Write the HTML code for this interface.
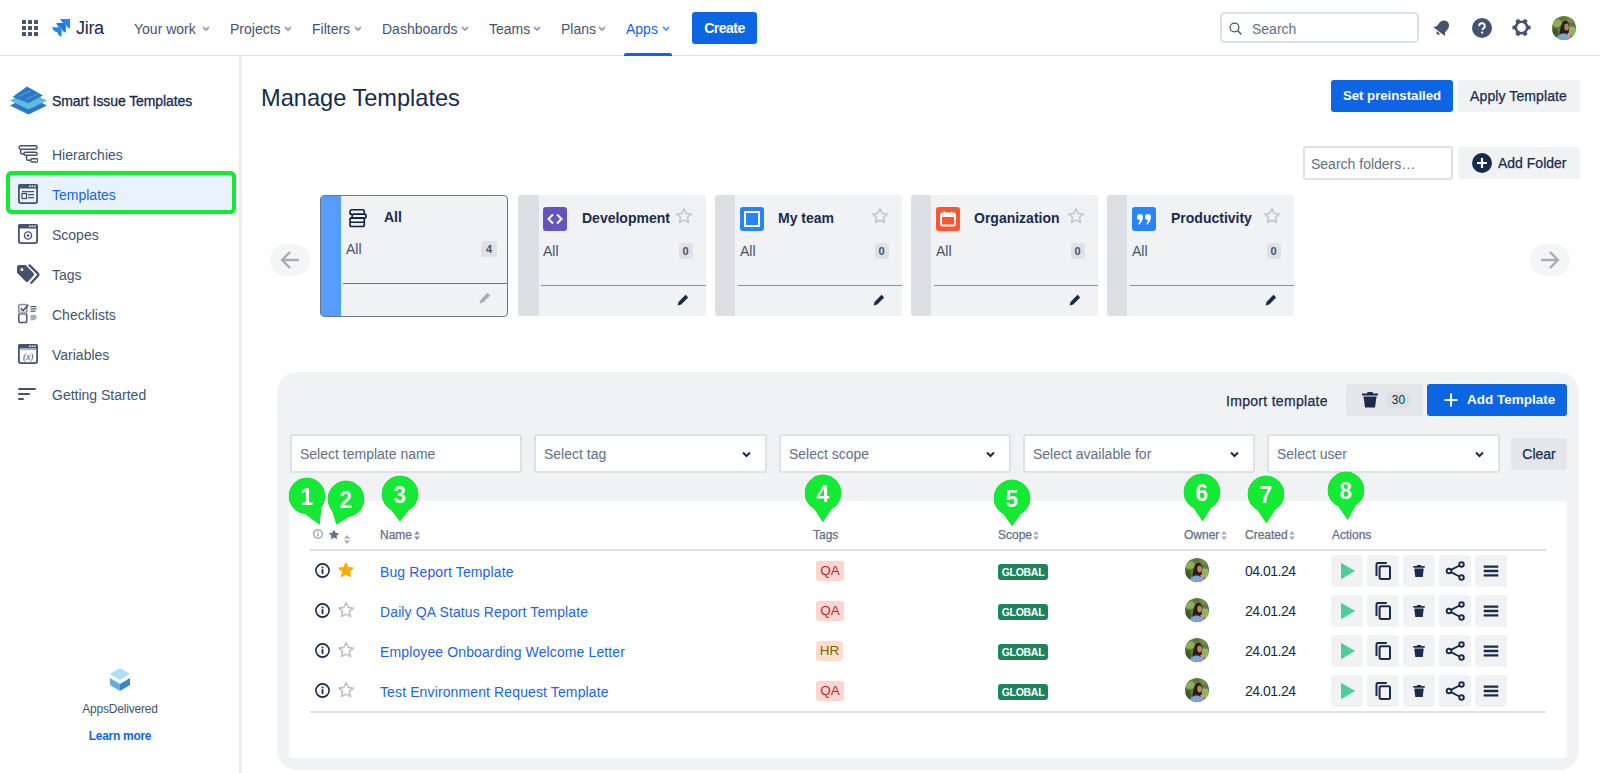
<!DOCTYPE html>
<html><head><meta charset="utf-8">
<style>
*{box-sizing:border-box;margin:0;padding:0}
html,body{width:1600px;height:773px;overflow:hidden;background:#fff;font-family:"Liberation Sans",sans-serif;color:#172b4d}
.a{position:absolute}
.t{position:absolute;white-space:nowrap;line-height:1}
svg{display:block}
/* header */
#hdr{position:absolute;left:0;top:0;width:1600px;height:56px;border-bottom:1px solid #dfe1e6;background:#fff}
.nav{position:absolute;top:21px;font-size:14px;color:#44546f;line-height:16px}
.chev{position:absolute;top:26px}
/* sidebar */
#side{position:absolute;left:0;top:56px;width:239px;height:717px;background:#fff}
#sideb{position:absolute;left:239px;top:56px;width:3px;height:717px;background:#ebecf0}
.si{position:absolute;left:52px;font-size:14px;color:#44546f;line-height:16px}
/* cards */
.card{position:absolute;top:195px;width:186.5px;height:121px;background:#f1f2f4;border-radius:3px;overflow:hidden}
.card .bar{position:absolute;left:0;top:0;width:21px;height:100%;background:#dcdfe4}
.card .ttl{position:absolute;top:15px;font-size:14px;font-weight:bold;color:#172b4d;line-height:16px}
.card .sub{position:absolute;left:25px;top:48px;font-size:14px;color:#44546f;line-height:16px}
.card .cnt{position:absolute;right:13px;top:48px;width:14px;height:16px;background:#dfe1e6;border-radius:3px;font-size:11px;font-weight:bold;color:#44546f;text-align:center;line-height:16px}
.card .div{position:absolute;left:23px;right:0;top:90px;height:1px;background:#8590a2}
.card .pen{position:absolute;right:16.5px;top:99px}
.card .star{position:absolute;right:12.5px;top:12px}
/* panel */
#panel{position:absolute;left:277px;top:372px;width:1302px;height:398px;background:#f1f2f4;border-radius:20px}
.inp{position:absolute;top:434px;height:39px;background:#fff;border:2px solid #dfe1e6;border-radius:3px;font-size:14px;color:#626f86;line-height:37px;padding-left:8px}
.inp svg{position:absolute;right:14px;top:15px}
#white{position:absolute;left:289px;top:501px;width:1278px;height:257px;background:#fff;border-radius:4px}
.th{position:absolute;top:529px;font-size:12px;color:#626f86;line-height:12px;-webkit-text-stroke:0.25px #626f86}
.sort{position:absolute;top:531px}
.link{position:absolute;left:380px;font-size:14px;color:#1d65de;line-height:16px;letter-spacing:0.12px}
.tag{position:absolute;left:816px;width:28px;height:20px;border-radius:3px;font-size:13.5px;line-height:19px;text-align:center}
.glob{position:absolute;left:998px;width:50px;height:16px;background:#1f845a;border-radius:3px;color:#fff;font-size:10.5px;font-weight:bold;line-height:16px;text-align:center;letter-spacing:-0.3px}
.date{position:absolute;left:1245px;font-size:14px;color:#172b4d;line-height:16px;letter-spacing:-0.5px}
.ab{position:absolute;width:32px;height:32px;background:#f1f2f4;border-radius:3px}
.ab svg{position:absolute;left:0;top:0}
.av{position:absolute;width:24px;height:24px;border-radius:50%;overflow:hidden}
.mk{position:absolute;width:40px;height:52px}
</style></head>
<body>
<!-- HEADER -->
<div id="hdr">
  <svg class="a" style="left:22px;top:20px" width="16" height="16" viewBox="0 0 16 16" fill="#44546f">
    <rect x="0" y="0" width="4" height="4" rx="0.6"/><rect x="6" y="0" width="4" height="4" rx="0.6"/><rect x="12" y="0" width="4" height="4" rx="0.6"/>
    <rect x="0" y="6" width="4" height="4" rx="0.6"/><rect x="6" y="6" width="4" height="4" rx="0.6"/><rect x="12" y="6" width="4" height="4" rx="0.6"/>
    <rect x="0" y="12" width="4" height="4" rx="0.6"/><rect x="6" y="12" width="4" height="4" rx="0.6"/><rect x="12" y="12" width="4" height="4" rx="0.6"/>
  </svg>
  <svg class="a" style="left:52px;top:18px" width="19" height="19" viewBox="0 0 19 19">
    <path d="M8.4 1h9.6v9.6C16 10.2 14.2 8.6 13.8 6 11.2 5.6 9 3.6 8.4 1z" fill="#2684ff"/>
    <path d="M4.2 5.1h9.6v9.6C11.8 14.3 10 12.7 9.6 10.1 7 9.7 4.8 7.7 4.2 5.1z" fill="#1d78f2"/>
    <path d="M0 9.2h9.6v9.6C7.6 18.4 5.8 16.8 5.4 14.2 2.8 13.8 .6 11.8 0 9.2z" fill="#2684ff"/>
  </svg>
  <div class="t" style="left:76px;top:19px;font-size:18px;color:#172b4d;line-height:18px;letter-spacing:-0.3px">Jira</div>

  <div class="nav" style="left:134px">Your work</div>
  <div class="nav" style="left:230px">Projects</div>
  <div class="nav" style="left:312px">Filters</div>
  <div class="nav" style="left:382px">Dashboards</div>
  <div class="nav" style="left:489px">Teams</div>
  <div class="nav" style="left:561px">Plans</div>
  <div class="nav" style="left:626px;color:#0c66e4">Apps</div>
  <svg class="chev" style="left:202px" width="8" height="6" viewBox="0 0 8 6"><path d="M1 1l3 3 3-3" stroke="#a1a9b7" stroke-width="2" fill="none"/></svg>
  <svg class="chev" style="left:284px" width="8" height="6" viewBox="0 0 8 6"><path d="M1 1l3 3 3-3" stroke="#a1a9b7" stroke-width="2" fill="none"/></svg>
  <svg class="chev" style="left:354px" width="8" height="6" viewBox="0 0 8 6"><path d="M1 1l3 3 3-3" stroke="#a1a9b7" stroke-width="2" fill="none"/></svg>
  <svg class="chev" style="left:461px" width="8" height="6" viewBox="0 0 8 6"><path d="M1 1l3 3 3-3" stroke="#a1a9b7" stroke-width="2" fill="none"/></svg>
  <svg class="chev" style="left:533px" width="8" height="6" viewBox="0 0 8 6"><path d="M1 1l3 3 3-3" stroke="#a1a9b7" stroke-width="2" fill="none"/></svg>
  <svg class="chev" style="left:598px" width="8" height="6" viewBox="0 0 8 6"><path d="M1 1l3 3 3-3" stroke="#a1a9b7" stroke-width="2" fill="none"/></svg>
  <svg class="chev" style="left:662px" width="8" height="6" viewBox="0 0 8 6"><path d="M1 1l3 3 3-3" stroke="#579dff" stroke-width="1.8" fill="none"/></svg>
  <div class="a" style="left:624px;top:53px;width:48px;height:3px;background:#0c66e4;border-radius:2px 2px 0 0"></div>
  <div class="a" style="left:692px;top:12px;width:65px;height:32px;background:#0c66e4;border-radius:3px;color:#fff;font-size:14px;font-weight:bold;text-align:center;line-height:33px;letter-spacing:-0.5px">Create</div>

  <div class="a" style="left:1220px;top:12px;width:199px;height:31px;border:2px solid #dcdfe4;border-radius:5px"></div>
  <svg class="a" style="left:1229px;top:22px" width="14" height="13" viewBox="0 0 14 13"><circle cx="5.5" cy="5.5" r="4.4" stroke="#44546f" stroke-width="1.3" fill="none"/><path d="M8.8 8.8l3.6 3.6" stroke="#44546f" stroke-width="1.4"/></svg>
  <div class="t" style="left:1252px;top:21px;font-size:14px;color:#626f86;line-height:16px">Search</div>

  <svg class="a" style="left:1432px;top:18px" width="20" height="20" viewBox="0 0 20 20"><g transform="rotate(38 10 10)"><path d="M10 1.8c-3.2 0-5.2 2.4-5.2 5.4v4.2L2.8 14.6h14.4l-2-3.2V7.2c0-3-2-5.4-5.2-5.4z" fill="#44546f"/><path d="M8 15.8a2 2 0 004 0z" fill="#44546f"/></g></svg>
  <svg class="a" style="left:1472px;top:18px" width="20" height="20" viewBox="0 0 20 20"><circle cx="10" cy="10" r="10" fill="#44546f"/><path d="M7.2 8.2a2.8 2.8 0 115.2 1.2c-.6.9-1.9 1.3-1.9 2.6" stroke="#fff" stroke-width="2" fill="none"/><rect x="9.1" y="13.6" width="2" height="2" fill="#fff"/></svg>
  <svg class="a" style="left:1512px;top:18px" width="19" height="19" viewBox="0 0 19 19"><g fill="#44546f"><circle cx="9.5" cy="9.5" r="7"/><rect x="7.4" y="0.4" width="4.2" height="4.5" rx="1.3" transform="rotate(30 9.5 9.5)"/><rect x="7.4" y="0.4" width="4.2" height="4.5" rx="1.3" transform="rotate(90 9.5 9.5)"/><rect x="7.4" y="0.4" width="4.2" height="4.5" rx="1.3" transform="rotate(150 9.5 9.5)"/><rect x="7.4" y="0.4" width="4.2" height="4.5" rx="1.3" transform="rotate(210 9.5 9.5)"/><rect x="7.4" y="0.4" width="4.2" height="4.5" rx="1.3" transform="rotate(270 9.5 9.5)"/><rect x="7.4" y="0.4" width="4.2" height="4.5" rx="1.3" transform="rotate(330 9.5 9.5)"/></g><circle cx="9.5" cy="9.5" r="4.4" fill="#fff"/></svg>
  <div class="av" style="left:1552px;top:16px">
    <svg width="24" height="24" viewBox="0 0 24 24"><rect width="24" height="24" fill="#5c7b3a"/><ellipse cx="5" cy="7" rx="5" ry="4" fill="#8fae5c"/><ellipse cx="20" cy="15" rx="4" ry="5" fill="#94b262"/><ellipse cx="19" cy="4" rx="4" ry="3" fill="#6f9048"/><ellipse cx="3" cy="17" rx="3" ry="5" fill="#3f5d2a"/><circle cx="4" cy="3" r="1.2" fill="#8a5aa0"/><circle cx="21" cy="3.5" r="1.2" fill="#9a62b0"/><circle cx="20" cy="10" r="1" fill="#8a5aa0"/><path d="M7 22c.5-5 1-9 2.2-13C10.2 6 12 4.6 14 4.8c2 .2 3.2 2.4 3.2 5.5 0 3.5-.6 7-1.2 10z" fill="#2e1d15"/><ellipse cx="14.6" cy="11" rx="2.3" ry="3.6" fill="#b48470"/><path d="M4.5 24c.8-3.5 2.5-6 5.5-6.5 2.5-.3 5 .3 6.5 2L17 24z" fill="#7ea4da"/><path d="M15.2 17.2l1.6-.5 2.8 7.3h-2z" fill="#e58ad0"/></svg>
  </div>
</div>

<!-- SIDEBAR -->
<div id="sideb"></div>
<svg class="a" style="left:10px;top:86px" width="37" height="29" viewBox="0 0 37 29">
  <path d="M0 19.5L18.5 10.5 37 19.5 18.5 28.5z" fill="#2b78c6"/>
  <path d="M0 14.5L18.5 5.5 37 14.5 18.5 23.5z" fill="#5fbcd9"/>
  <path d="M2.5 11L17 0.5 33 9.5 18.5 17z" fill="#2b78c6"/>
  <path d="M8.5 10.5L21 4.5M16 13.5L28.5 7.5" stroke="#4a9fd5" stroke-width="1.3"/>
</svg>
<div class="t" style="left:52px;top:93px;font-size:14px;color:#172b4d;line-height:16px;-webkit-text-stroke:0.3px #172b4d;letter-spacing:-0.1px">Smart Issue Templates</div>

<div class="a" style="left:6px;top:171px;width:230px;height:43px;border:4px solid #12ea33;border-radius:6px;background:#e9f2ff;box-shadow:0 0 1px rgba(0,0,0,.5)"></div>

<svg class="a" style="left:18px;top:145px" width="20" height="19" viewBox="0 0 20 19" fill="none" stroke="#44546f" stroke-width="1.5">
  <rect x="1.1" y="0.75" width="18" height="3.4" rx="1.7"/><rect x="6" y="7.35" width="13.1" height="3" rx="1.5"/><rect x="12.75" y="13.85" width="7.1" height="3.2" rx="1.3"/>
  <path d="M2.6 4.3V7.6q0 1.3 1.3 1.3H6M8.6 10.6v3.4q0 1.3 1.3 1.3h2.9"/>
</svg>
<div class="si" style="top:147px">Hierarchies</div>

<svg class="a" style="left:18px;top:184px" width="20" height="20" viewBox="0 0 20 20">
  <rect x="0.9" y="0.9" width="18.2" height="18.2" rx="2" fill="none" stroke="#44546f" stroke-width="1.8"/><rect x="0" y="0" width="20" height="4.5" rx="2" fill="#44546f"/>
  <rect x="11" y="1.5" width="1.6" height="1.4" fill="#fff"/><rect x="13.5" y="1.5" width="1.6" height="1.4" fill="#fff"/><rect x="16" y="1.5" width="1.6" height="1.4" fill="#fff"/>
  <rect x="4" y="7" width="12" height="1.2" fill="#44546f"/><rect x="4" y="9.5" width="4.5" height="5" fill="none" stroke="#44546f" stroke-width="1.3"/><rect x="10" y="10" width="6" height="1.3" fill="#44546f"/><rect x="10" y="13" width="6" height="1.3" fill="#44546f"/>
</svg>
<div class="si" style="top:187px;color:#0c66e4">Templates</div>

<svg class="a" style="left:18px;top:224px" width="20" height="20" viewBox="0 0 20 20">
  <rect x="0.9" y="0.9" width="18.2" height="18.2" rx="2" fill="none" stroke="#44546f" stroke-width="1.8"/><rect x="0" y="0" width="20" height="4.5" rx="2" fill="#44546f"/>
  <rect x="11" y="1.5" width="1.6" height="1.4" fill="#fff"/><rect x="13.5" y="1.5" width="1.6" height="1.4" fill="#fff"/><rect x="16" y="1.5" width="1.6" height="1.4" fill="#fff"/>
  <circle cx="10" cy="11.5" r="3.6" fill="none" stroke="#44546f" stroke-width="1.4"/><circle cx="10" cy="11.5" r="1.3" fill="#44546f"/>
</svg>
<div class="si" style="top:227px">Scopes</div>

<svg class="a" style="left:16px;top:264px" width="24" height="20" viewBox="0 0 24 20">
  <path d="M13.6 1.4l8.1 8q1.2 1.3 0 2.6l-6.4 6.8" fill="none" stroke="#44546f" stroke-width="2.3" stroke-linecap="round"/>
  <path d="M1 3q0-2 2-2h6.6l7.9 7.9q1.3 1.4 0 2.8l-5.3 5.7q-1.2 1.2-2.5 0L1 8.8z" fill="#44546f"/><circle cx="5.9" cy="5.5" r="1.5" fill="#fff"/>
</svg>
<div class="si" style="top:267px">Tags</div>

<svg class="a" style="left:18px;top:303px" width="20" height="21" viewBox="0 0 20 21">
  <rect x="0.8" y="1.5" width="8" height="8" rx="1.2" fill="none" stroke="#8590a2" stroke-width="1.5"/><path d="M2.8 5.2l2.3 2.3 5.2-5.8" fill="none" stroke="#44546f" stroke-width="1.6"/>
  <rect x="0.8" y="10.8" width="8" height="8.6" rx="1.2" fill="none" stroke="#44546f" stroke-width="1.5"/><rect x="1" y="8.8" width="7.6" height="2" fill="#a5adba"/>
  <rect x="12.5" y="3" width="6" height="1.2" fill="#44546f"/><rect x="12.5" y="5.3" width="6" height="1.2" fill="#44546f"/><rect x="12.5" y="7.6" width="5" height="1.2" fill="#44546f"/>
  <path d="M12.5 12h6v3.2l-2 2h-4z" fill="#a5adba"/>
</svg>
<div class="si" style="top:307px">Checklists</div>

<svg class="a" style="left:18px;top:344px" width="20" height="20" viewBox="0 0 20 20">
  <rect x="0.9" y="0.9" width="18.2" height="18.2" rx="2" fill="none" stroke="#44546f" stroke-width="1.8"/><rect x="0" y="0" width="20" height="4.5" rx="2" fill="#44546f"/>
  <rect x="11" y="1.5" width="1.6" height="1.4" fill="#fff"/><rect x="13.5" y="1.5" width="1.6" height="1.4" fill="#fff"/><rect x="16" y="1.5" width="1.6" height="1.4" fill="#fff"/>
  <rect x="1.5" y="5.3" width="17" height="0.8" fill="#8590a2"/><text x="10" y="15.8" font-family="Liberation Serif" font-style="italic" font-size="10" text-anchor="middle" fill="#44546f" letter-spacing="-0.3">(x)</text>
</svg>
<div class="si" style="top:347px">Variables</div>

<svg class="a" style="left:18px;top:388px" width="19" height="12" viewBox="0 0 19 12" fill="#44546f">
  <rect x="0" y="0" width="18" height="2" rx="1"/><rect x="0" y="5" width="12" height="2" rx="1"/><rect x="0" y="10" width="6" height="2" rx="1"/>
</svg>
<div class="si" style="top:387px">Getting Started</div>

<svg class="a" style="left:110px;top:668px" width="20" height="23" viewBox="0 0 20 23">
  <path d="M10 0L20 6 10 12 0 6z" fill="#aedff5"/>
  <path d="M0 10l10 6v7L0 17z" fill="#5fb0e6"/><path d="M20 10l-10 6v7l10-6z" fill="#3d84c6"/>
</svg>
<div class="t" style="left:82px;top:703px;width:76px;font-size:12px;color:#44546f;line-height:12px;letter-spacing:-0.2px;text-align:center">AppsDelivered</div>
<div class="t" style="left:60px;top:730px;width:120px;font-size:12px;font-weight:bold;color:#0c66e4;line-height:12px;text-align:center;letter-spacing:-0.3px">Learn more</div>

<!-- MAIN TOP -->
<div class="t" style="left:261px;top:86px;font-size:23.6px;color:#172b4d;line-height:24px">Manage Templates</div>
<div class="a" style="left:1331px;top:80px;width:122px;height:32px;background:#0c66e4;border-radius:3px;color:#fff;font-size:13.2px;font-weight:bold;text-align:center;line-height:32px">Set preinstalled</div>
<div class="a" style="left:1457px;top:80px;width:123px;height:32px;background:#f1f2f4;border-radius:3px;color:#172b4d;font-size:14px;text-align:center;line-height:32px;-webkit-text-stroke:0.25px #172b4d;letter-spacing:0.1px">Apply Template</div>
<div class="a" style="left:1303px;top:146px;width:150px;height:34px;border:2px solid #dfe1e6;border-radius:3px;font-size:14px;color:#626f86;line-height:32px;padding-left:6px">Search folders…</div>
<div class="a" style="left:1458px;top:147px;width:122px;height:32px;background:#f1f2f4;border-radius:3px"></div>
<svg class="a" style="left:1472px;top:153px" width="20" height="20" viewBox="0 0 20 20"><circle cx="10" cy="10" r="10" fill="#172b4d"/><path d="M10 5v10M5 10h10" stroke="#fff" stroke-width="2.2"/></svg>
<div class="t" style="left:1498px;top:155px;font-size:14px;color:#172b4d;line-height:16px;-webkit-text-stroke:0.25px #172b4d">Add Folder</div>

<!-- arrows -->
<div class="a" style="left:270px;top:244px;width:40px;height:32px;border-radius:16px;background:#f4f5f7"></div>
<svg class="a" style="left:280px;top:250px" width="20" height="20" viewBox="0 0 20 20"><path d="M19 10H2.5M10 2L2 10l8 8" stroke="#a5adba" stroke-width="2.4" fill="none"/></svg>
<div class="a" style="left:1530px;top:244px;width:40px;height:32px;border-radius:16px;background:#f4f5f7"></div>
<svg class="a" style="left:1540px;top:250px" width="20" height="20" viewBox="0 0 20 20"><path d="M1 10h16.5M10 2l8 8-8 8" stroke="#a5adba" stroke-width="2.4" fill="none"/></svg>

<!-- CARDS -->
<div class="card" style="left:320px;width:188px;height:122px;border:1px solid #6b778c;border-radius:4px">
  <div class="bar" style="background:#579dff;width:20px"></div>
  <svg class="a" style="left:23px;top:8px" width="28" height="28" viewBox="0 0 28 28" fill="none" stroke="#0b1f44" stroke-width="1.6">
    <path d="M6 10.4V7.6q0-1.8 1.8-1.8h10.7q1.8 0 1.8 1.8v2.6"/>
    <rect x="8.1" y="10.1" width="14" height="4" rx="1.8"/>
    <path d="M6 10.1h2.1M6 14.1v6.6q0 1.8 1.8 1.8h10.7q1.8 0 1.8-1.8v-6.6M6 14.1h14.3M6 18.3h14.3"/>
  </svg>
  <div class="ttl" style="left:63px;top:13px">All</div>
  <div class="sub" style="top:45px">All</div>
  <div class="cnt" style="right:10px;top:45px;width:16px">4</div>
  <div class="div" style="left:22px;top:87px;background:#6b778c"></div>
  <svg class="a" style="right:16px;top:96px" width="12" height="12" viewBox="0 0 12 12"><path d="M8.5 0.8l2.7 2.7-7 7-3.6 1 .9-3.6z" fill="#a5adba"/></svg>
</div>

<div class="card" style="left:518px;width:187.5px">
  <div class="bar"></div>
  <svg class="a" style="left:25px;top:12px" width="24" height="24" viewBox="0 0 24 24"><rect width="24" height="24" rx="3" fill="#6554c0"/><path d="M10 7.5L5.5 12l4.5 4.5M14 7.5l4.5 4.5-4.5 4.5" stroke="#fff" stroke-width="2" fill="none"/></svg>
  <div class="ttl" style="left:64px">Development</div>
  <svg class="star" width="18" height="18" viewBox="0 0 24 24"><path d="M12 2.5l2.9 6.1 6.6.8-4.9 4.6 1.3 6.6L12 17.3l-5.9 3.3 1.3-6.6-4.9-4.6 6.6-.8z" fill="none" stroke="#c4c7cc" stroke-width="2.2" stroke-linejoin="round"/></svg>
  <div class="sub">All</div>
  <div class="cnt">0</div>
  <div class="div"></div>
  <svg class="pen" width="12" height="12" viewBox="0 0 12 12"><path d="M8.5 0.8l2.7 2.7-7 7-3.6 1 .9-3.6z" fill="#172b4d"/></svg>
</div>

<div class="card" style="left:715px">
  <div class="bar" style="width:20px"></div>
  <svg class="a" style="left:25px;top:12px" width="24" height="24" viewBox="0 0 24 24"><rect width="24" height="24" rx="3" fill="#2684ff"/><rect x="5" y="5" width="14" height="14" fill="none" stroke="#fff" stroke-width="2"/></svg>
  <div class="ttl" style="left:63px">My team</div>
  <svg class="star" width="18" height="18" viewBox="0 0 24 24"><path d="M12 2.5l2.9 6.1 6.6.8-4.9 4.6 1.3 6.6L12 17.3l-5.9 3.3 1.3-6.6-4.9-4.6 6.6-.8z" fill="none" stroke="#c4c7cc" stroke-width="2.2" stroke-linejoin="round"/></svg>
  <div class="sub">All</div>
  <div class="cnt">0</div>
  <div class="div"></div>
  <svg class="pen" width="12" height="12" viewBox="0 0 12 12"><path d="M8.5 0.8l2.7 2.7-7 7-3.6 1 .9-3.6z" fill="#172b4d"/></svg>
</div>

<div class="card" style="left:911px">
  <div class="bar" style="width:20px"></div>
  <svg class="a" style="left:25px;top:12px" width="24" height="24" viewBox="0 0 24 24"><rect width="24" height="24" rx="3" fill="#ff5630"/><rect x="5" y="6.5" width="14" height="12" rx="1.5" fill="none" stroke="#fff" stroke-width="2"/><rect x="5" y="7" width="14" height="3" fill="#fff"/><rect x="7.5" y="4.5" width="1.8" height="3" fill="#fff"/><rect x="14.7" y="4.5" width="1.8" height="3" fill="#fff"/></svg>
  <div class="ttl" style="left:63px">Organization</div>
  <svg class="star" width="18" height="18" viewBox="0 0 24 24"><path d="M12 2.5l2.9 6.1 6.6.8-4.9 4.6 1.3 6.6L12 17.3l-5.9 3.3 1.3-6.6-4.9-4.6 6.6-.8z" fill="none" stroke="#c4c7cc" stroke-width="2.2" stroke-linejoin="round"/></svg>
  <div class="sub">All</div>
  <div class="cnt">0</div>
  <div class="div"></div>
  <svg class="pen" width="12" height="12" viewBox="0 0 12 12"><path d="M8.5 0.8l2.7 2.7-7 7-3.6 1 .9-3.6z" fill="#172b4d"/></svg>
</div>

<div class="card" style="left:1107px">
  <div class="bar" style="width:20px"></div>
  <svg class="a" style="left:25px;top:12px" width="24" height="24" viewBox="0 0 24 24"><rect width="24" height="24" rx="3" fill="#2684ff"/><g fill="#fff"><circle cx="8" cy="10" r="3"/><path d="M10.6 11c0 3-2 5.5-3.8 6.8l-.8-.8c1.2-1.3 2-3 2-5z"/><circle cx="16" cy="10" r="3"/><path d="M18.6 11c0 3-2 5.5-3.8 6.8l-.8-.8c1.2-1.3 2-3 2-5z"/></g></svg>
  <div class="ttl" style="left:64px">Productivity</div>
  <svg class="star" width="18" height="18" viewBox="0 0 24 24"><path d="M12 2.5l2.9 6.1 6.6.8-4.9 4.6 1.3 6.6L12 17.3l-5.9 3.3 1.3-6.6-4.9-4.6 6.6-.8z" fill="none" stroke="#c4c7cc" stroke-width="2.2" stroke-linejoin="round"/></svg>
  <div class="sub">All</div>
  <div class="cnt">0</div>
  <div class="div"></div>
  <svg class="pen" width="12" height="12" viewBox="0 0 12 12"><path d="M8.5 0.8l2.7 2.7-7 7-3.6 1 .9-3.6z" fill="#172b4d"/></svg>
</div>

<!-- PANEL -->
<div id="panel"></div>
<div class="t" style="left:1226px;top:393px;font-size:14px;color:#172b4d;line-height:16px;-webkit-text-stroke:0.25px #172b4d;letter-spacing:0.3px">Import template</div>
<div class="a" style="left:1346px;top:384px;width:77px;height:32px;background:#e4e6ea;border-radius:3px"></div>
<svg class="a" style="left:1361px;top:391px" width="18" height="17" viewBox="0 0 18 17"><path d="M6.5 1h5l.5 1.5H17v2H1v-2h5z" fill="#172b4d"/><path d="M2.5 5.5h13L14 16.5H4z" fill="#172b4d"/></svg>
<div class="a" style="left:1386px;top:392px;width:25px;height:16px;background:#dcdfe4;border-radius:8px;font-size:12px;color:#172b4d;text-align:center;line-height:16px">30</div>
<div class="a" style="left:1427px;top:384px;width:140px;height:32px;background:#0c66e4;border-radius:3px"></div>
<svg class="a" style="left:1444px;top:393px" width="14" height="14" viewBox="0 0 14 14"><path d="M7 0.5v13M0.5 7h13" stroke="#fff" stroke-width="2"/></svg>
<div class="t" style="left:1467px;top:392px;font-size:13.5px;font-weight:bold;color:#fff;line-height:16px">Add Template</div>

<div class="inp" style="left:290px;width:232px">Select template name</div>
<div class="inp" style="left:534px;width:233px">Select tag<svg width="9" height="7" viewBox="0 0 9 7"><path d="M1 1.5l3.5 3.5 3.5-3.5" stroke="#172b4d" stroke-width="2" fill="none"/></svg></div>
<div class="inp" style="left:779px;width:232px">Select scope<svg width="9" height="7" viewBox="0 0 9 7"><path d="M1 1.5l3.5 3.5 3.5-3.5" stroke="#172b4d" stroke-width="2" fill="none"/></svg></div>
<div class="inp" style="left:1023px;width:232px">Select available for<svg width="9" height="7" viewBox="0 0 9 7"><path d="M1 1.5l3.5 3.5 3.5-3.5" stroke="#172b4d" stroke-width="2" fill="none"/></svg></div>
<div class="inp" style="left:1267px;width:233px">Select user<svg width="9" height="7" viewBox="0 0 9 7"><path d="M1 1.5l3.5 3.5 3.5-3.5" stroke="#172b4d" stroke-width="2" fill="none"/></svg></div>
<div class="a" style="left:1511px;top:438px;width:56px;height:32px;background:#e4e6ea;border-radius:3px;font-size:14px;color:#172b4d;text-align:center;line-height:32px;-webkit-text-stroke:0.25px #172b4d">Clear</div>

<div id="white"></div>
<!-- table header -->
<svg class="a" style="left:313px;top:529px" width="10" height="10" viewBox="0 0 10 10"><circle cx="5" cy="5" r="4.3" fill="none" stroke="#8590a2" stroke-width="1.1"/><rect x="4.4" y="4.2" width="1.2" height="3.5" fill="#8590a2"/><rect x="4.4" y="2.3" width="1.2" height="1.2" fill="#8590a2"/></svg>
<svg class="a" style="left:328px;top:529px" width="12" height="11" viewBox="0 0 24 23"><path d="M12 1l3.3 6.8 7.5 1-5.4 5.3 1.3 7.4L12 18l-6.7 3.5 1.3-7.4L1.2 8.8l7.5-1z" fill="#626f86"/></svg>
<svg class="sort" style="left:344px;top:535px" width="6" height="9" viewBox="0 0 6 9"><path d="M0 3.5L3 0l3 3.5zM0 5.5L3 9l3-3.5z" fill="#a5adba"/></svg>
<div class="th" style="left:380px">Name</div>
<svg class="sort" style="left:414px" width="6" height="9" viewBox="0 0 6 9"><path d="M0 3.5L3 0l3 3.5zM0 5.5L3 9l3-3.5z" fill="#8590a2"/></svg>
<div class="th" style="left:813px">Tags</div>
<div class="th" style="left:998px">Scope</div>
<svg class="sort" style="left:1033px" width="6" height="9" viewBox="0 0 6 9"><path d="M0 3.5L3 0l3 3.5zM0 5.5L3 9l3-3.5z" fill="#a5adba"/></svg>
<div class="th" style="left:1184px">Owner</div>
<svg class="sort" style="left:1221px" width="6" height="9" viewBox="0 0 6 9"><path d="M0 3.5L3 0l3 3.5zM0 5.5L3 9l3-3.5z" fill="#a5adba"/></svg>
<div class="th" style="left:1245px">Created</div>
<svg class="sort" style="left:1289px" width="6" height="9" viewBox="0 0 6 9"><path d="M0 3.5L3 0l3 3.5zM0 5.5L3 9l3-3.5z" fill="#a5adba"/></svg>
<div class="th" style="left:1332px">Actions</div>
<div class="a" style="left:310px;top:549px;width:1236px;height:2px;background:#dfe1e6"></div>
<div class="a" style="left:310px;top:711px;width:1236px;height:2px;background:#dfe1e6"></div>

<div id="rows"></div>
<svg class="a" style="left:315px;top:563px" width="15" height="15" viewBox="0 0 15 15"><circle cx="7.5" cy="7.5" r="6.6" fill="none" stroke="#172b4d" stroke-width="1.6"/><rect x="6.6" y="6.3" width="1.8" height="4.6" fill="#172b4d"/><rect x="6.6" y="3.6" width="1.8" height="1.8" fill="#172b4d"/></svg>
<svg class="a" style="left:337px;top:561px" width="18" height="18" viewBox="0 0 24 24"><path d="M12 2.5l2.9 6.1 6.6.8-4.9 4.6 1.3 6.6L12 17.3l-5.9 3.3 1.3-6.6-4.9-4.6 6.6-.8z" fill="#ffab00" stroke="#ffab00" stroke-width="1.5" stroke-linejoin="round"/></svg>
<div class="link" style="top:564px">Bug Report Template</div>
<div class="tag" style="top:561px;background:#ffd5d2;color:#ae2e24">QA</div>
<div class="glob" style="top:564px">GLOBAL</div>
<div class="av" style="left:1185px;top:558px"><svg width="24" height="24" viewBox="0 0 24 24"><rect width="24" height="24" fill="#5c7b3a"/><ellipse cx="5" cy="7" rx="5" ry="4" fill="#8fae5c"/><ellipse cx="20" cy="15" rx="4" ry="5" fill="#94b262"/><ellipse cx="19" cy="4" rx="4" ry="3" fill="#6f9048"/><ellipse cx="3" cy="17" rx="3" ry="5" fill="#3f5d2a"/><circle cx="4" cy="3" r="1.2" fill="#8a5aa0"/><circle cx="21" cy="3.5" r="1.2" fill="#9a62b0"/><circle cx="20" cy="10" r="1" fill="#8a5aa0"/><path d="M7 22c.5-5 1-9 2.2-13C10.2 6 12 4.6 14 4.8c2 .2 3.2 2.4 3.2 5.5 0 3.5-.6 7-1.2 10z" fill="#2e1d15"/><ellipse cx="14.6" cy="11" rx="2.3" ry="3.6" fill="#b48470"/><path d="M4.5 24c.8-3.5 2.5-6 5.5-6.5 2.5-.3 5 .3 6.5 2L17 24z" fill="#7ea4da"/><path d="M15.2 17.2l1.6-.5 2.8 7.3h-2z" fill="#e58ad0"/></svg></div>
<div class="date" style="top:563px">04.01.24</div>
<div class="ab" style="left:1331px;top:555px"><svg width="32" height="32" viewBox="0 0 32 32"><path d="M10 7.7v16.6l14-8.3z" fill="#4bce97"/></svg></div>
<div class="ab" style="left:1367px;top:555px"><svg width="32" height="32" viewBox="0 0 32 32"><rect x="12.6" y="11.3" width="10.4" height="12.6" rx="1.5" fill="none" stroke="#172b4d" stroke-width="2"/><path d="M9.5 21V9.4c0-.9.6-1.5 1.5-1.5h8.8" fill="none" stroke="#172b4d" stroke-width="2"/></svg></div>
<div class="ab" style="left:1403px;top:555px"><svg width="32" height="32" viewBox="0 0 32 32"><path d="M14.2 10h3.6l.4 1h3.5v1.8H10.3V11h3.5z" fill="#172b4d"/><path d="M11.3 13.4h9.4l-1 8.6h-7.4z" fill="#172b4d"/></svg></div>
<div class="ab" style="left:1439px;top:555px"><svg width="32" height="32" viewBox="0 0 32 32"><circle cx="22.5" cy="9.5" r="2.3" fill="none" stroke="#172b4d" stroke-width="1.9"/><circle cx="10" cy="16" r="2.3" fill="none" stroke="#172b4d" stroke-width="1.9"/><circle cx="22.5" cy="22.5" r="2.3" fill="none" stroke="#172b4d" stroke-width="1.9"/><path d="M12 14.8l8.5-4.3M12 17.2l8.5 4.3" stroke="#172b4d" stroke-width="1.9"/></svg></div>
<div class="ab" style="left:1475px;top:555px"><svg width="32" height="32" viewBox="0 0 32 32"><path d="M8.7 11.7h14.6M8.7 16h14.6M8.7 20.3h14.6" stroke="#172b4d" stroke-width="2.3"/></svg></div>
<svg class="a" style="left:315px;top:603px" width="15" height="15" viewBox="0 0 15 15"><circle cx="7.5" cy="7.5" r="6.6" fill="none" stroke="#172b4d" stroke-width="1.6"/><rect x="6.6" y="6.3" width="1.8" height="4.6" fill="#172b4d"/><rect x="6.6" y="3.6" width="1.8" height="1.8" fill="#172b4d"/></svg>
<svg class="a" style="left:337px;top:601px" width="18" height="18" viewBox="0 0 24 24"><path d="M12 2.5l2.9 6.1 6.6.8-4.9 4.6 1.3 6.6L12 17.3l-5.9 3.3 1.3-6.6-4.9-4.6 6.6-.8z" fill="none" stroke="#c4c4c8" stroke-width="2.3" stroke-linejoin="round"/></svg>
<div class="link" style="top:604px">Daily QA Status Report Template</div>
<div class="tag" style="top:601px;background:#ffd5d2;color:#ae2e24">QA</div>
<div class="glob" style="top:604px">GLOBAL</div>
<div class="av" style="left:1185px;top:598px"><svg width="24" height="24" viewBox="0 0 24 24"><rect width="24" height="24" fill="#5c7b3a"/><ellipse cx="5" cy="7" rx="5" ry="4" fill="#8fae5c"/><ellipse cx="20" cy="15" rx="4" ry="5" fill="#94b262"/><ellipse cx="19" cy="4" rx="4" ry="3" fill="#6f9048"/><ellipse cx="3" cy="17" rx="3" ry="5" fill="#3f5d2a"/><circle cx="4" cy="3" r="1.2" fill="#8a5aa0"/><circle cx="21" cy="3.5" r="1.2" fill="#9a62b0"/><circle cx="20" cy="10" r="1" fill="#8a5aa0"/><path d="M7 22c.5-5 1-9 2.2-13C10.2 6 12 4.6 14 4.8c2 .2 3.2 2.4 3.2 5.5 0 3.5-.6 7-1.2 10z" fill="#2e1d15"/><ellipse cx="14.6" cy="11" rx="2.3" ry="3.6" fill="#b48470"/><path d="M4.5 24c.8-3.5 2.5-6 5.5-6.5 2.5-.3 5 .3 6.5 2L17 24z" fill="#7ea4da"/><path d="M15.2 17.2l1.6-.5 2.8 7.3h-2z" fill="#e58ad0"/></svg></div>
<div class="date" style="top:603px">24.01.24</div>
<div class="ab" style="left:1331px;top:595px"><svg width="32" height="32" viewBox="0 0 32 32"><path d="M10 7.7v16.6l14-8.3z" fill="#4bce97"/></svg></div>
<div class="ab" style="left:1367px;top:595px"><svg width="32" height="32" viewBox="0 0 32 32"><rect x="12.6" y="11.3" width="10.4" height="12.6" rx="1.5" fill="none" stroke="#172b4d" stroke-width="2"/><path d="M9.5 21V9.4c0-.9.6-1.5 1.5-1.5h8.8" fill="none" stroke="#172b4d" stroke-width="2"/></svg></div>
<div class="ab" style="left:1403px;top:595px"><svg width="32" height="32" viewBox="0 0 32 32"><path d="M14.2 10h3.6l.4 1h3.5v1.8H10.3V11h3.5z" fill="#172b4d"/><path d="M11.3 13.4h9.4l-1 8.6h-7.4z" fill="#172b4d"/></svg></div>
<div class="ab" style="left:1439px;top:595px"><svg width="32" height="32" viewBox="0 0 32 32"><circle cx="22.5" cy="9.5" r="2.3" fill="none" stroke="#172b4d" stroke-width="1.9"/><circle cx="10" cy="16" r="2.3" fill="none" stroke="#172b4d" stroke-width="1.9"/><circle cx="22.5" cy="22.5" r="2.3" fill="none" stroke="#172b4d" stroke-width="1.9"/><path d="M12 14.8l8.5-4.3M12 17.2l8.5 4.3" stroke="#172b4d" stroke-width="1.9"/></svg></div>
<div class="ab" style="left:1475px;top:595px"><svg width="32" height="32" viewBox="0 0 32 32"><path d="M8.7 11.7h14.6M8.7 16h14.6M8.7 20.3h14.6" stroke="#172b4d" stroke-width="2.3"/></svg></div>
<svg class="a" style="left:315px;top:643px" width="15" height="15" viewBox="0 0 15 15"><circle cx="7.5" cy="7.5" r="6.6" fill="none" stroke="#172b4d" stroke-width="1.6"/><rect x="6.6" y="6.3" width="1.8" height="4.6" fill="#172b4d"/><rect x="6.6" y="3.6" width="1.8" height="1.8" fill="#172b4d"/></svg>
<svg class="a" style="left:337px;top:641px" width="18" height="18" viewBox="0 0 24 24"><path d="M12 2.5l2.9 6.1 6.6.8-4.9 4.6 1.3 6.6L12 17.3l-5.9 3.3 1.3-6.6-4.9-4.6 6.6-.8z" fill="none" stroke="#c4c4c8" stroke-width="2.3" stroke-linejoin="round"/></svg>
<div class="link" style="top:644px">Employee Onboarding Welcome Letter</div>
<div class="tag" style="top:641px;background:#fedec8;color:#7f5f01;width:27px">HR</div>
<div class="glob" style="top:644px">GLOBAL</div>
<div class="av" style="left:1185px;top:638px"><svg width="24" height="24" viewBox="0 0 24 24"><rect width="24" height="24" fill="#5c7b3a"/><ellipse cx="5" cy="7" rx="5" ry="4" fill="#8fae5c"/><ellipse cx="20" cy="15" rx="4" ry="5" fill="#94b262"/><ellipse cx="19" cy="4" rx="4" ry="3" fill="#6f9048"/><ellipse cx="3" cy="17" rx="3" ry="5" fill="#3f5d2a"/><circle cx="4" cy="3" r="1.2" fill="#8a5aa0"/><circle cx="21" cy="3.5" r="1.2" fill="#9a62b0"/><circle cx="20" cy="10" r="1" fill="#8a5aa0"/><path d="M7 22c.5-5 1-9 2.2-13C10.2 6 12 4.6 14 4.8c2 .2 3.2 2.4 3.2 5.5 0 3.5-.6 7-1.2 10z" fill="#2e1d15"/><ellipse cx="14.6" cy="11" rx="2.3" ry="3.6" fill="#b48470"/><path d="M4.5 24c.8-3.5 2.5-6 5.5-6.5 2.5-.3 5 .3 6.5 2L17 24z" fill="#7ea4da"/><path d="M15.2 17.2l1.6-.5 2.8 7.3h-2z" fill="#e58ad0"/></svg></div>
<div class="date" style="top:643px">24.01.24</div>
<div class="ab" style="left:1331px;top:635px"><svg width="32" height="32" viewBox="0 0 32 32"><path d="M10 7.7v16.6l14-8.3z" fill="#4bce97"/></svg></div>
<div class="ab" style="left:1367px;top:635px"><svg width="32" height="32" viewBox="0 0 32 32"><rect x="12.6" y="11.3" width="10.4" height="12.6" rx="1.5" fill="none" stroke="#172b4d" stroke-width="2"/><path d="M9.5 21V9.4c0-.9.6-1.5 1.5-1.5h8.8" fill="none" stroke="#172b4d" stroke-width="2"/></svg></div>
<div class="ab" style="left:1403px;top:635px"><svg width="32" height="32" viewBox="0 0 32 32"><path d="M14.2 10h3.6l.4 1h3.5v1.8H10.3V11h3.5z" fill="#172b4d"/><path d="M11.3 13.4h9.4l-1 8.6h-7.4z" fill="#172b4d"/></svg></div>
<div class="ab" style="left:1439px;top:635px"><svg width="32" height="32" viewBox="0 0 32 32"><circle cx="22.5" cy="9.5" r="2.3" fill="none" stroke="#172b4d" stroke-width="1.9"/><circle cx="10" cy="16" r="2.3" fill="none" stroke="#172b4d" stroke-width="1.9"/><circle cx="22.5" cy="22.5" r="2.3" fill="none" stroke="#172b4d" stroke-width="1.9"/><path d="M12 14.8l8.5-4.3M12 17.2l8.5 4.3" stroke="#172b4d" stroke-width="1.9"/></svg></div>
<div class="ab" style="left:1475px;top:635px"><svg width="32" height="32" viewBox="0 0 32 32"><path d="M8.7 11.7h14.6M8.7 16h14.6M8.7 20.3h14.6" stroke="#172b4d" stroke-width="2.3"/></svg></div>
<svg class="a" style="left:315px;top:683px" width="15" height="15" viewBox="0 0 15 15"><circle cx="7.5" cy="7.5" r="6.6" fill="none" stroke="#172b4d" stroke-width="1.6"/><rect x="6.6" y="6.3" width="1.8" height="4.6" fill="#172b4d"/><rect x="6.6" y="3.6" width="1.8" height="1.8" fill="#172b4d"/></svg>
<svg class="a" style="left:337px;top:681px" width="18" height="18" viewBox="0 0 24 24"><path d="M12 2.5l2.9 6.1 6.6.8-4.9 4.6 1.3 6.6L12 17.3l-5.9 3.3 1.3-6.6-4.9-4.6 6.6-.8z" fill="none" stroke="#c4c4c8" stroke-width="2.3" stroke-linejoin="round"/></svg>
<div class="link" style="top:684px">Test Environment Request Template</div>
<div class="tag" style="top:681px;background:#ffd5d2;color:#ae2e24">QA</div>
<div class="glob" style="top:684px">GLOBAL</div>
<div class="av" style="left:1185px;top:678px"><svg width="24" height="24" viewBox="0 0 24 24"><rect width="24" height="24" fill="#5c7b3a"/><ellipse cx="5" cy="7" rx="5" ry="4" fill="#8fae5c"/><ellipse cx="20" cy="15" rx="4" ry="5" fill="#94b262"/><ellipse cx="19" cy="4" rx="4" ry="3" fill="#6f9048"/><ellipse cx="3" cy="17" rx="3" ry="5" fill="#3f5d2a"/><circle cx="4" cy="3" r="1.2" fill="#8a5aa0"/><circle cx="21" cy="3.5" r="1.2" fill="#9a62b0"/><circle cx="20" cy="10" r="1" fill="#8a5aa0"/><path d="M7 22c.5-5 1-9 2.2-13C10.2 6 12 4.6 14 4.8c2 .2 3.2 2.4 3.2 5.5 0 3.5-.6 7-1.2 10z" fill="#2e1d15"/><ellipse cx="14.6" cy="11" rx="2.3" ry="3.6" fill="#b48470"/><path d="M4.5 24c.8-3.5 2.5-6 5.5-6.5 2.5-.3 5 .3 6.5 2L17 24z" fill="#7ea4da"/><path d="M15.2 17.2l1.6-.5 2.8 7.3h-2z" fill="#e58ad0"/></svg></div>
<div class="date" style="top:683px">24.01.24</div>
<div class="ab" style="left:1331px;top:675px"><svg width="32" height="32" viewBox="0 0 32 32"><path d="M10 7.7v16.6l14-8.3z" fill="#4bce97"/></svg></div>
<div class="ab" style="left:1367px;top:675px"><svg width="32" height="32" viewBox="0 0 32 32"><rect x="12.6" y="11.3" width="10.4" height="12.6" rx="1.5" fill="none" stroke="#172b4d" stroke-width="2"/><path d="M9.5 21V9.4c0-.9.6-1.5 1.5-1.5h8.8" fill="none" stroke="#172b4d" stroke-width="2"/></svg></div>
<div class="ab" style="left:1403px;top:675px"><svg width="32" height="32" viewBox="0 0 32 32"><path d="M14.2 10h3.6l.4 1h3.5v1.8H10.3V11h3.5z" fill="#172b4d"/><path d="M11.3 13.4h9.4l-1 8.6h-7.4z" fill="#172b4d"/></svg></div>
<div class="ab" style="left:1439px;top:675px"><svg width="32" height="32" viewBox="0 0 32 32"><circle cx="22.5" cy="9.5" r="2.3" fill="none" stroke="#172b4d" stroke-width="1.9"/><circle cx="10" cy="16" r="2.3" fill="none" stroke="#172b4d" stroke-width="1.9"/><circle cx="22.5" cy="22.5" r="2.3" fill="none" stroke="#172b4d" stroke-width="1.9"/><path d="M12 14.8l8.5-4.3M12 17.2l8.5 4.3" stroke="#172b4d" stroke-width="1.9"/></svg></div>
<div class="ab" style="left:1475px;top:675px"><svg width="32" height="32" viewBox="0 0 32 32"><path d="M8.7 11.7h14.6M8.7 16h14.6M8.7 20.3h14.6" stroke="#172b4d" stroke-width="2.3"/></svg></div>
<svg class="a" style="left:282.5px;top:472.0px;filter:drop-shadow(0 0 0.6px rgba(60,0,0,.55))" width="48" height="60" viewBox="0 0 48 60"><circle cx="24" cy="24" r="18.2" fill="#12ea33"/><path d="M38.28 35.28L36.50 52.50L22.63 42.15Z" fill="#12ea33"/><text x="24" y="32.5" text-anchor="middle" font-family="Liberation Sans" font-weight="bold" font-size="23" fill="#fff">1</text></svg>
<svg class="a" style="left:321.5px;top:475.0px;filter:drop-shadow(0 0 0.6px rgba(60,0,0,.55))" width="48" height="60" viewBox="0 0 48 60"><circle cx="24" cy="24" r="18.2" fill="#12ea33"/><path d="M26.40 42.04L14.50 49.50L10.38 36.08Z" fill="#12ea33"/><text x="24" y="32.5" text-anchor="middle" font-family="Liberation Sans" font-weight="bold" font-size="23" fill="#fff">2</text></svg>
<svg class="a" style="left:375.5px;top:470.0px;filter:drop-shadow(0 0 0.6px rgba(60,0,0,.55))" width="48" height="60" viewBox="0 0 48 60"><circle cx="24" cy="24" r="18.2" fill="#12ea33"/><path d="M32.54 40.07L24.00 51.60L15.46 40.07Z" fill="#12ea33"/><text x="24" y="32.5" text-anchor="middle" font-family="Liberation Sans" font-weight="bold" font-size="23" fill="#fff">3</text></svg>
<svg class="a" style="left:798.5px;top:468.5px;filter:drop-shadow(0 0 0.6px rgba(60,0,0,.55))" width="48" height="60" viewBox="0 0 48 60"><circle cx="24" cy="24" r="18.2" fill="#12ea33"/><path d="M32.49 40.10L23.90 53.00L15.40 40.04Z" fill="#12ea33"/><text x="24" y="32.5" text-anchor="middle" font-family="Liberation Sans" font-weight="bold" font-size="23" fill="#fff">4</text></svg>
<svg class="a" style="left:988.3px;top:473.5px;filter:drop-shadow(0 0 0.6px rgba(60,0,0,.55))" width="48" height="60" viewBox="0 0 48 60"><circle cx="24" cy="24" r="18.2" fill="#12ea33"/><path d="M32.60 40.04L24.10 51.90L15.51 40.10Z" fill="#12ea33"/><text x="24" y="32.5" text-anchor="middle" font-family="Liberation Sans" font-weight="bold" font-size="23" fill="#fff">5</text></svg>
<svg class="a" style="left:1177.6px;top:467.5px;filter:drop-shadow(0 0 0.6px rgba(60,0,0,.55))" width="48" height="60" viewBox="0 0 48 60"><circle cx="24" cy="24" r="18.2" fill="#12ea33"/><path d="M32.93 39.86L24.70 53.20L15.84 40.27Z" fill="#12ea33"/><text x="24" y="32.5" text-anchor="middle" font-family="Liberation Sans" font-weight="bold" font-size="23" fill="#fff">6</text></svg>
<svg class="a" style="left:1241.7px;top:469.5px;filter:drop-shadow(0 0 0.6px rgba(60,0,0,.55))" width="48" height="60" viewBox="0 0 48 60"><circle cx="24" cy="24" r="18.2" fill="#12ea33"/><path d="M32.82 39.92L24.50 53.20L15.73 40.21Z" fill="#12ea33"/><text x="24" y="32.5" text-anchor="middle" font-family="Liberation Sans" font-weight="bold" font-size="23" fill="#fff">7</text></svg>
<svg class="a" style="left:1321.6px;top:466.3px;filter:drop-shadow(0 0 0.6px rgba(60,0,0,.55))" width="48" height="60" viewBox="0 0 48 60"><circle cx="24" cy="24" r="18.2" fill="#12ea33"/><path d="M33.50 39.52L25.80 53.70L16.44 40.56Z" fill="#12ea33"/><text x="24" y="32.5" text-anchor="middle" font-family="Liberation Sans" font-weight="bold" font-size="23" fill="#fff">8</text></svg>
</body></html>
